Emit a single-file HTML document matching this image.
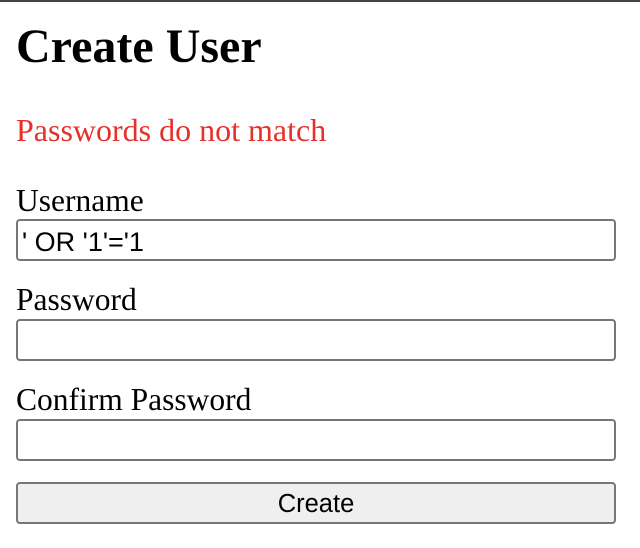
<!DOCTYPE html>
<html><head><meta charset="utf-8"><style>
html,body{margin:0;padding:0;background:#fff;width:640px;height:548px;overflow:hidden;position:relative}
.bar{position:absolute;left:0;top:0;width:640px;height:2px;background:#444}
.t{position:absolute;left:16px;font-family:"Liberation Serif",serif;white-space:nowrap;line-height:1.107}
h1{margin:0;font-size:48px;font-weight:bold;top:20px}
.err{color:#e8302a;font-size:32px;top:113px}
.lbl{font-size:31.5px;color:#000}
.box{position:absolute;left:16px;width:596px;height:38px;border:2px solid #767676;border-radius:4px;background:#fff;box-sizing:content-box}
.val{position:absolute;left:22px;font-family:"Liberation Sans",sans-serif;font-size:27px;line-height:27px;white-space:nowrap}
.btn{position:absolute;left:16px;top:482px;width:596px;height:38px;border:2px solid #767676;border-radius:4px;background:#efefef;font-family:"Liberation Sans",sans-serif;font-size:25.5px;line-height:40px;text-align:center;color:#000}
</style></head><body>
<div class="bar"></div>
<h1 class="t">Create User</h1>
<div class="t err">Passwords do not match</div>
<div class="t lbl" style="top:184px">Username</div>
<div class="box" style="top:219px"></div>
<div class="val" style="top:229px">' OR '1'='1</div>
<div class="t lbl" style="top:283px">Password</div>
<div class="box" style="top:319px"></div>
<div class="t lbl" style="top:383px">Confirm Password</div>
<div class="box" style="top:419px"></div>
<div class="btn">Create</div>
</body></html>
